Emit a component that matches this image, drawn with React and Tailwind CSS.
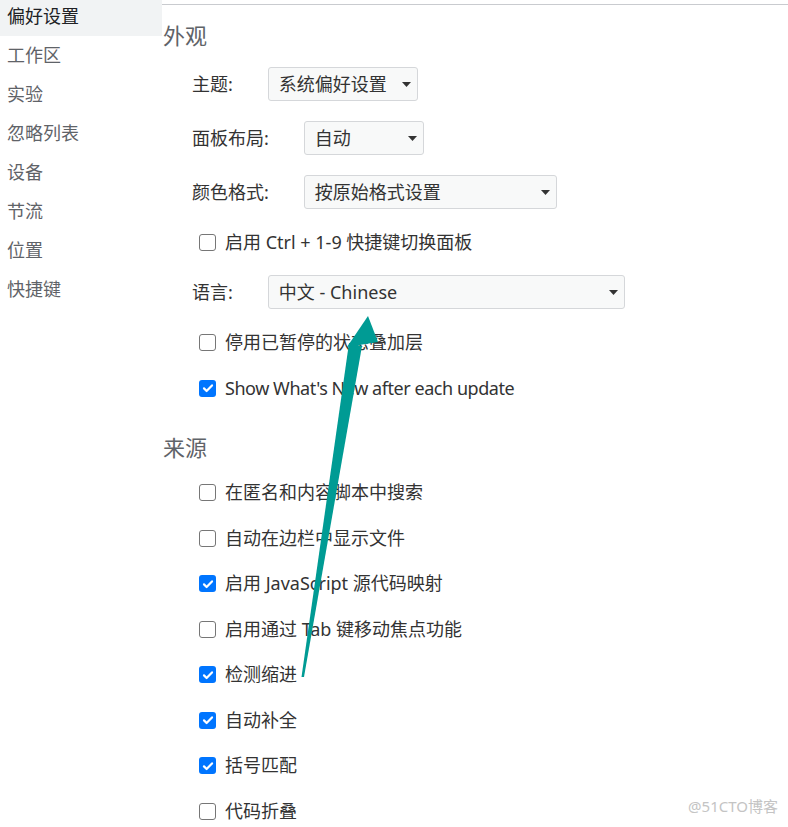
const sidebarItems = ["偏好设置", "工作区", "实验", "忽略列表", "设备", "节流", "位置", "快捷键"];

const sourceItems = [
  { label: "在匿名和内容脚本中搜索", checked: false },
  { label: "自动在边栏中显示文件", checked: false },
  { label: "启用 JavaScript 源代码映射", checked: true },
  { label: "启用通过 Tab 键移动焦点功能", checked: false },
  { label: "检测缩进", checked: true },
  { label: "自动补全", checked: true },
  { label: "括号匹配", checked: true },
  { label: "代码折叠", checked: false },
];

const Checkbox = ({ checked }) =>
  checked ? (
    <span className="flex items-center justify-center w-[17px] h-[17px] rounded-[3px] bg-[#0075ff] shrink-0">
      <svg className="w-[12px] h-[12px]" viewBox="0 0 12 12" fill="none">
        <path d="M2 6.4l2.6 2.6L10 3.4" stroke="white" strokeWidth="2.2" strokeLinecap="round" strokeLinejoin="round" />
      </svg>
    </span>
  ) : (
    <span className="w-[17px] h-[17px] rounded-[3px] border-[1.5px] border-[#767676] bg-white shrink-0"></span>
  );

const CheckRow = ({ label, checked, height = "h-[46px]", tight = false }) => (
  <div className={`flex items-center ${height} pl-[37px]`}>
    <Checkbox checked={checked} />
    <span className={`ml-[9px] ${tight ? "tracking-[-0.45px]" : ""}`}>{label}</span>
  </div>
);

const Select = ({ value, width }) => (
  <div
    className={`flex items-center justify-between h-[34px] ${width} pl-[10px] pr-[6px] bg-[#f8f9f9] border border-[#d5d7da] rounded-[3px]`}
  >
    <span>{value}</span>
    <svg className="w-[9px] h-[5px]" viewBox="0 0 9 5">
      <path d="M0 0h9L4.5 5z" fill="#333" />
    </svg>
  </div>
);

const SelectRow = ({ label, value, width }) => (
  <div className="flex items-center h-[54px] pl-[30px]">
    <span className="mr-[35px]">{label}</span>
    <Select value={value} width={width} />
  </div>
);

export default function App() {
  return (
    <div
      className="relative w-[788px] h-[827px] overflow-hidden bg-white text-[18px] text-[#333]"
      style={{ fontFamily: '"Noto Sans", "Noto Sans CJK SC", sans-serif' }}
    >
      <div className="flex">
        <div className="w-[162px] shrink-0 -mt-[3px]">
          {sidebarItems.map((item, i) => (
            <div
              key={item}
              className={`flex items-center h-[39px] pl-[7px] ${
                i === 0 ? "bg-[#f1f3f4] text-[#202124]" : "text-[#5f6368]"
              }`}
            >
              {item}
            </div>
          ))}
        </div>

        <div className="flex-1 mt-[4px] border-t border-[#c9cbcf]">
          <div className="flex items-center h-[52px] pt-[8px] pl-[1px] text-[22px] text-[#5f6368]">外观</div>
          <SelectRow label="主题:" value="系统偏好设置" width="w-[150px]" />
          <SelectRow label="面板布局:" value="自动" width="w-[120px]" />
          <SelectRow label="颜色格式:" value="按原始格式设置" width="w-[253px]" />
          <CheckRow label="启用 Ctrl + 1-9 快捷键切换面板" checked={false} />
          <SelectRow label="语言:" value="中文 - Chinese" width="w-[357px]" />
          <CheckRow label="停用已暂停的状态叠加层" checked={false} />
          <CheckRow label="Show What's New after each update" checked={true} tight />

          <div className="flex items-center h-[59px] pt-[13px] pl-[1px] text-[22px] text-[#5f6368]">来源</div>
          {sourceItems.map((item) => (
            <CheckRow key={item.label} label={item.label} checked={item.checked} height="h-[45.5px]" />
          ))}
        </div>
      </div>

      <svg className="absolute left-0 top-0 w-[788px] h-[827px] pointer-events-none" viewBox="0 0 788 827">
        <polygon points="301.5,677 304,677 362,346 349,343" fill="#009b94" />
        <polygon points="368,316 347,347 378,342" fill="#009b94" />
      </svg>

      <div className="absolute right-[10px] bottom-[10px] text-[15px] text-[#c4c4c4]">@51CTO博客</div>
    </div>
  );
}
